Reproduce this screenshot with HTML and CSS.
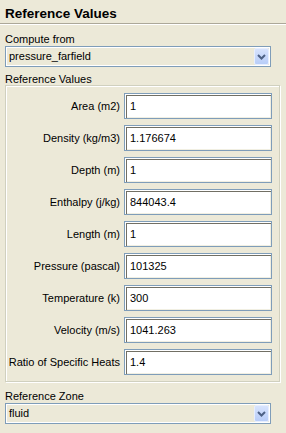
FILE: index.html
```html
<!DOCTYPE html>
<html>
<head>
<meta charset="utf-8">
<link rel="stylesheet" href="styles.css">
</head>
<body>
<div class="panel">
  <div class="title">Reference Values</div>
  <div class="label">Compute from</div>
  <div class="combo">
    <span class="combo-text">pressure_farfield</span>
    <span class="combo-btn"><svg width="9" height="6" viewBox="0 0 9 6"><path d="M1 1 L4.5 4.5 L8 1" fill="none" stroke="#4d6185" stroke-width="2"/></svg></span>
  </div>
  <div class="label group-label">Reference Values</div>
  <div class="group">
    <div class="row"><span class="name">Area (m2)</span><div class="field">1</div></div>
    <div class="row"><span class="name">Density (kg/m3)</span><div class="field">1.176674</div></div>
    <div class="row"><span class="name">Depth (m)</span><div class="field">1</div></div>
    <div class="row"><span class="name">Enthalpy (j/kg)</span><div class="field">844043.4</div></div>
    <div class="row"><span class="name">Length (m)</span><div class="field">1</div></div>
    <div class="row"><span class="name">Pressure (pascal)</span><div class="field">101325</div></div>
    <div class="row"><span class="name">Temperature (k)</span><div class="field">300</div></div>
    <div class="row"><span class="name">Velocity (m/s)</span><div class="field">1041.263</div></div>
    <div class="row"><span class="name">Ratio of Specific Heats</span><div class="field">1.4</div></div>
  </div>
  <div class="label zone-label">Reference Zone</div>
  <div class="combo">
    <span class="combo-text">fluid</span>
    <span class="combo-btn"><svg width="9" height="6" viewBox="0 0 9 6"><path d="M1 1 L4.5 4.5 L8 1" fill="none" stroke="#4d6185" stroke-width="2"/></svg></span>
  </div>
</div>
</body>
</html>
```
FILE: styles.css
```css
html, body {
  margin: 0;
  padding: 0;
  background: #ece9d8;
}
body {
  width: 286px;
  height: 433px;
  overflow: hidden;
  font-family: "Liberation Sans", Arial, sans-serif;
  font-size: 11px;
  color: #000;
}
.panel {
  display: flex;
  flex-direction: column;
}
.title {
  font-weight: bold;
  font-size: 13.5px;
  line-height: 17px;
  padding: 5px 5px 0;
  height: 18px;
  border-bottom: 1px solid #aca899;
  box-shadow: 0 1px 0 #fff;
}
.label {
  margin: 9px 5px 0;
  line-height: 12px;
  height: 12px;
}
.group-label {
  margin-top: 6px;
}
.zone-label {
  margin-top: 8px;
}
.combo {
  margin: 1px 0 0 5px;
  width: 264px;
  height: 19px;
  border: 1px solid #7f9db9;
  box-shadow: inset 1px 1px 0 #fff, inset -1px -1px 0 #fff;
  background: #ece9d8;
  display: flex;
  align-items: center;
  justify-content: space-between;
}
.combo-text {
  padding-left: 3px;
  line-height: 19px;
}
.combo-btn {
  width: 15px;
  height: 17px;
  margin-right: 1px;
  box-sizing: border-box;
  border: 1px solid #e6eeff;
  border-radius: 2px;
  background: linear-gradient(#d7e3fd, #b8cdf8);
  display: flex;
  align-items: center;
  justify-content: center;
}
.group {
  box-sizing: border-box;
  margin: 0 0 0 5px;
  width: 275px;
  border: 1px solid #d0d0bf;
  box-shadow: 1px 1px 0 #fff, inset 1px 1px 0 #fff;
  padding: 7px 7px 6px 0;
  display: flex;
  flex-direction: column;
  gap: 6px;
}
.row {
  display: grid;
  grid-template-columns: 1fr 148px;
  column-gap: 4px;
  align-items: center;
}
.name {
  text-align: right;
  white-space: nowrap;
}
.field {
  height: 24px;
  border: 1px solid #7f9db9;
  background: #fff;
  box-shadow: inset 1px 1px 0 #fff, inset 2px 2px 0 #716f64, inset -1px -1px 0 #f1efe2;
  padding-left: 5px;
  line-height: 25px;
  font-size: 11px;
}
```
